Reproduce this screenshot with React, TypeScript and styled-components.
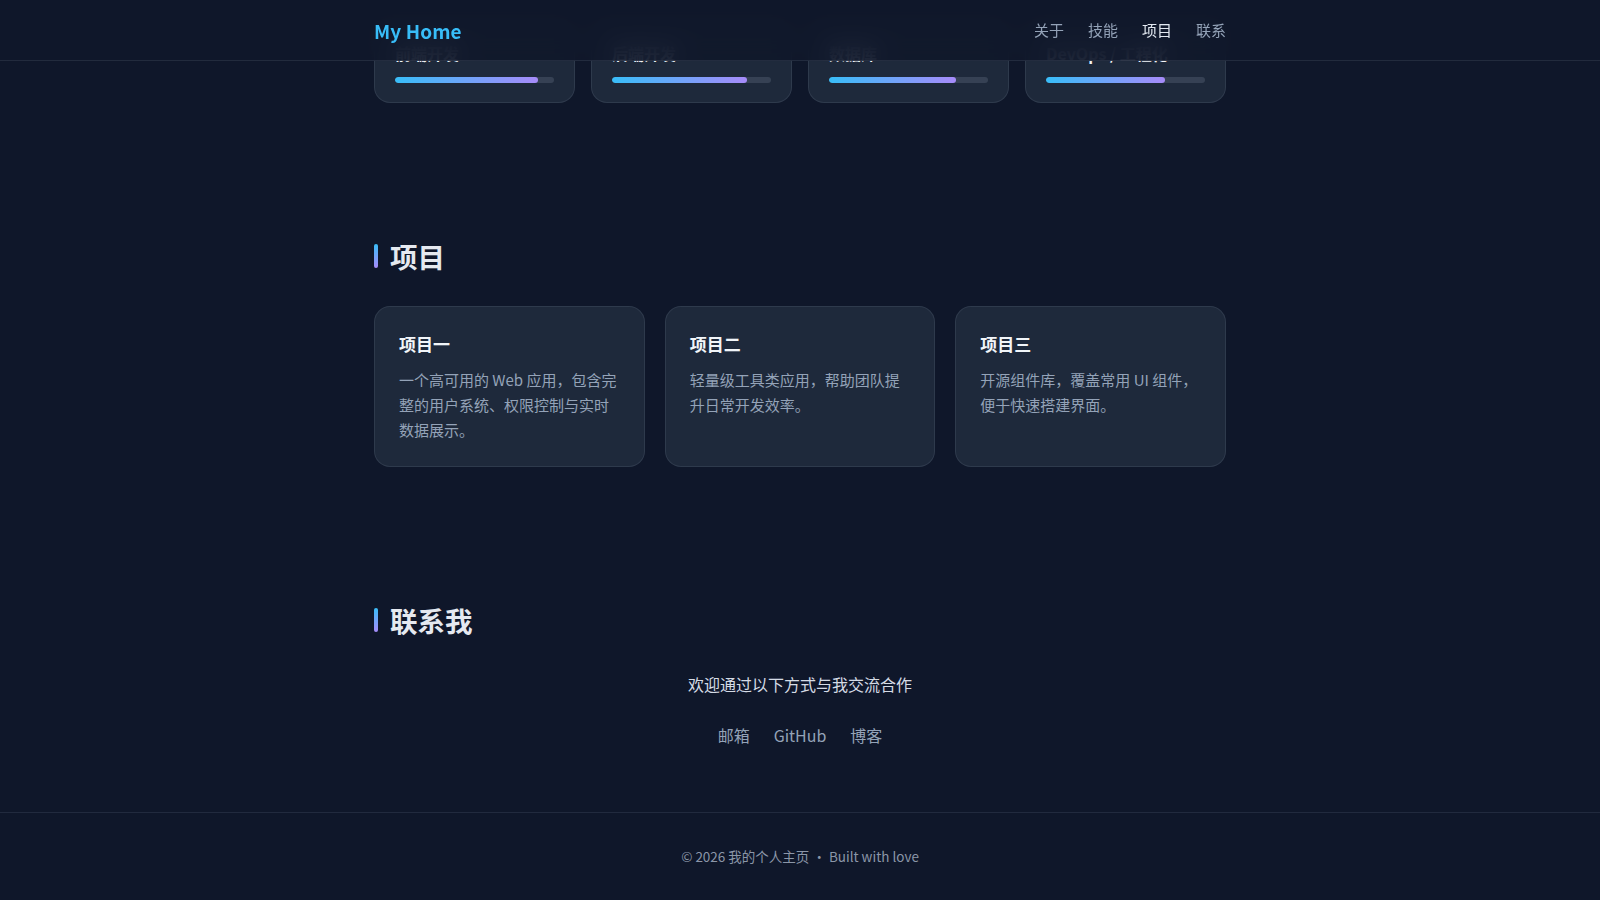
import React, { useLayoutEffect, useRef } from "react";
import styled, { createGlobalStyle } from "styled-components";

const GlobalStyle = createGlobalStyle`
  html, body {
    margin: 0;
    padding: 0;
    background: #0f172a;
  }
  * { box-sizing: border-box; }
  body {
    font-family: "Noto Sans CJK SC", "Noto Sans", sans-serif;
    color: #e2e8f0;
    -webkit-font-smoothing: antialiased;
  }
`;

const Scroller = styled.div`
  height: 100vh;
  overflow-y: auto;
  background: #0f172a;
  scrollbar-width: none;
  &::-webkit-scrollbar { display: none; }
`;

const Header = styled.header`
  position: sticky;
  top: 0;
  z-index: 10;
  height: 61px;
  background: rgba(15, 23, 42, 0.9);
  backdrop-filter: blur(12px);
  -webkit-backdrop-filter: blur(12px);
  border-bottom: 1px solid rgba(148, 163, 184, 0.14);
`;

const Container = styled.div`
  max-width: 900px;
  margin: 0 auto;
  padding: 0 24px;
`;

const HeaderInner = styled(Container)`
  height: 60px;
  display: flex;
  align-items: center;
  justify-content: space-between;
`;

const Logo = styled.a`
  font-size: 19px;
  font-weight: 700;
  color: #38bdf8;
  text-decoration: none;
  letter-spacing: 0.1px;
`;

const Nav = styled.nav`
  display: flex;
  gap: 24px;
`;

const NavLink = styled.a<{ $active?: boolean }>`
  font-size: 15px;
  line-height: 22px;
  color: ${(p) => (p.$active ? "#e2e8f0" : "#94a3b8")};
  text-decoration: none;
`;

const Section = styled.section`
  padding: 71px 0 64px;
`;

const SectionTitle = styled.h2`
  display: flex;
  align-items: center;
  gap: 12px;
  margin: 0 0 32px;
  font-size: 27.5px;
  line-height: 36px;
  font-weight: 700;
  color: #e5e9f0;

  &::before {
    content: "";
    width: 4px;
    height: 24px;
    border-radius: 2px;
    background: linear-gradient(180deg, #38bdf8, #a78bfa);
  }
`;

const Hero = styled.section`
  padding: 120px 0 64px;
`;

const HeroTitle = styled.h1`
  margin: 0 0 16px;
  font-size: 44px;
  line-height: 1.3;
  font-weight: 700;
  color: #f1f5f9;
`;

const Paragraph = styled.p`
  margin: 0;
  font-size: 16px;
  line-height: 1.8;
  color: #94a3b8;
`;

const SkillGrid = styled.div`
  display: grid;
  grid-template-columns: repeat(4, 1fr);
  gap: 16px;
`;

const SkillCard = styled.div`
  background: #1e293b;
  border: 1px solid rgba(148, 163, 184, 0.14);
  border-radius: 16px;
  padding: 21px 20px 19px;
`;

const SkillName = styled.div`
  font-size: 16px;
  line-height: 24px;
  font-weight: 700;
  color: #f1f5f9;
  margin-bottom: 12px;
`;

const Track = styled.div`
  height: 6px;
  border-radius: 3px;
  background: rgba(148, 163, 184, 0.2);
  overflow: hidden;
`;

const Fill = styled.div`
  height: 100%;
  border-radius: 3px;
  background: linear-gradient(90deg, #38bdf8, #a78bfa);
`;

const ProjectGrid = styled.div`
  display: grid;
  grid-template-columns: repeat(3, 1fr);
  gap: 20px;
`;

const ProjectCard = styled.article`
  background: #1e293b;
  border: 1px solid rgba(148, 163, 184, 0.14);
  border-radius: 16px;
  padding: 24px;
`;

const ProjectName = styled.h3`
  margin: 0 0 10px;
  font-size: 17px;
  line-height: 26px;
  font-weight: 700;
  color: #f1f5f9;
`;

const ProjectDesc = styled.p`
  margin: 0;
  font-size: 15px;
  line-height: 25px;
  color: #94a3b8;
`;

const ContactIntro = styled.p`
  margin: 0 0 24px;
  text-align: center;
  font-size: 16px;
  line-height: 28px;
  color: #d5dbe5;
`;

const ContactLinks = styled.div`
  display: flex;
  justify-content: center;
  gap: 24px;
`;

const ContactLink = styled.a`
  font-size: 16px;
  line-height: 26px;
  color: #94a3b8;
  text-decoration: none;
`;

const Footer = styled.footer`
  border-top: 1px solid rgba(148, 163, 184, 0.14);
  padding: 32px 0;
  text-align: center;
  font-size: 13.5px;
  line-height: 23px;
  color: #8b96a8;
`;

const Dot = styled.span`
  margin: 0 3px;
`;

const skills = [
  { name: "前端开发", level: 90 },
  { name: "后端开发", level: 85 },
  { name: "数据库", level: 80 },
  { name: "DevOps / 工程化", level: 75 },
];

const projects = [
  {
    name: "项目一",
    desc: "一个高可用的 Web 应用，包含完整的用户系统、权限控制与实时数据展示。",
  },
  { name: "项目二", desc: "轻量级工具类应用，帮助团队提升日常开发效率。" },
  { name: "项目三", desc: "开源组件库，覆盖常用 UI 组件，便于快速搭建界面。" },
];

export default function App() {
  const scrollRef = useRef<HTMLDivElement>(null);

  useLayoutEffect(() => {
    const el = scrollRef.current;
    if (!el) return;
    const toEnd = () => {
      el.scrollTop = el.scrollHeight;
    };
    toEnd();
    document.fonts?.ready.then(toEnd);
  }, []);

  return (
    <>
      <GlobalStyle />
      <Scroller ref={scrollRef}>
        <Header>
          <HeaderInner>
            <Logo href="#top">My Home</Logo>
            <Nav>
              <NavLink href="#about">关于</NavLink>
              <NavLink href="#skills">技能</NavLink>
              <NavLink href="#projects" $active>
                项目
              </NavLink>
              <NavLink href="#contact">联系</NavLink>
            </Nav>
          </HeaderInner>
        </Header>

        <main>
          <Container>
            <Hero id="top">
              <HeroTitle>你好，欢迎来到我的主页</HeroTitle>
              <Paragraph>一名热爱技术的开发者，专注于 Web 开发与工程实践。</Paragraph>
            </Hero>

            <Section id="about">
              <SectionTitle>关于我</SectionTitle>
              <Paragraph>
                喜欢把复杂的问题拆解成简单的步骤，享受从零到一构建产品的过程。
              </Paragraph>
            </Section>

            <Section id="skills">
              <SectionTitle>技能</SectionTitle>
              <SkillGrid>
                {skills.map((s) => (
                  <SkillCard key={s.name}>
                    <SkillName>{s.name}</SkillName>
                    <Track>
                      <Fill style={{ width: `${s.level}%` }} />
                    </Track>
                  </SkillCard>
                ))}
              </SkillGrid>
            </Section>

            <Section id="projects">
              <SectionTitle>项目</SectionTitle>
              <ProjectGrid>
                {projects.map((p) => (
                  <ProjectCard key={p.name}>
                    <ProjectName>{p.name}</ProjectName>
                    <ProjectDesc>{p.desc}</ProjectDesc>
                  </ProjectCard>
                ))}
              </ProjectGrid>
            </Section>

            <Section id="contact">
              <SectionTitle>联系我</SectionTitle>
              <ContactIntro>欢迎通过以下方式与我交流合作</ContactIntro>
              <ContactLinks>
                <ContactLink href="#contact">邮箱</ContactLink>
                <ContactLink href="#contact">GitHub</ContactLink>
                <ContactLink href="#contact">博客</ContactLink>
              </ContactLinks>
            </Section>
          </Container>
        </main>

        <Footer>
          © 2026 我的个人主页<Dot>·</Dot>Built with love
        </Footer>
      </Scroller>
    </>
  );
}
